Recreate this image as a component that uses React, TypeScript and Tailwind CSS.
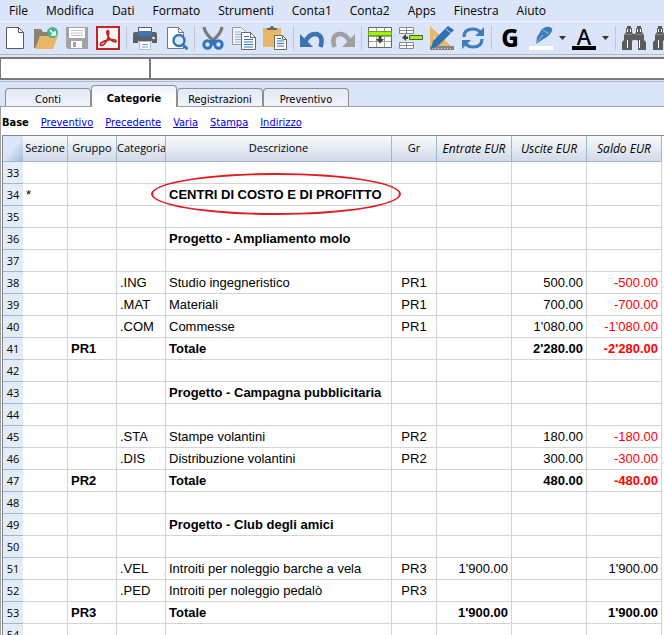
import type { ReactNode } from "react";

const menus = ["File", "Modifica", "Dati", "Formato", "Strumenti", "Conta1", "Conta2", "Apps", "Finestra", "Aiuto"];
const tabs = ["Conti", "Categorie", "Registrazioni", "Preventivo"];
const views = ["Preventivo", "Precedente", "Varia", "Stampa", "Indirizzo"];

type Row = {
  n: number;
  sezione?: string;
  gruppo?: string;
  categoria?: string;
  descrizione?: string;
  gr?: string;
  entrate?: string;
  uscite?: string;
  saldo?: string;
  bold?: boolean;
  circled?: boolean;
};

const rows: Row[] = [
  { n: 33 },
  { n: 34, sezione: "*", descrizione: "CENTRI DI COSTO E DI PROFITTO", bold: true, circled: true },
  { n: 35 },
  { n: 36, descrizione: "Progetto - Ampliamento molo", bold: true },
  { n: 37 },
  { n: 38, categoria: ".ING", descrizione: "Studio ingegneristico", gr: "PR1", uscite: "500.00", saldo: "-500.00" },
  { n: 39, categoria: ".MAT", descrizione: "Materiali", gr: "PR1", uscite: "700.00", saldo: "-700.00" },
  { n: 40, categoria: ".COM", descrizione: "Commesse", gr: "PR1", uscite: "1'080.00", saldo: "-1'080.00" },
  { n: 41, gruppo: "PR1", descrizione: "Totale", uscite: "2'280.00", saldo: "-2'280.00", bold: true },
  { n: 42 },
  { n: 43, descrizione: "Progetto - Campagna pubblicitaria", bold: true },
  { n: 44 },
  { n: 45, categoria: ".STA", descrizione: "Stampe volantini", gr: "PR2", uscite: "180.00", saldo: "-180.00" },
  { n: 46, categoria: ".DIS", descrizione: "Distribuzione volantini", gr: "PR2", uscite: "300.00", saldo: "-300.00" },
  { n: 47, gruppo: "PR2", descrizione: "Totale", uscite: "480.00", saldo: "-480.00", bold: true },
  { n: 48 },
  { n: 49, descrizione: "Progetto - Club degli amici", bold: true },
  { n: 50 },
  { n: 51, categoria: ".VEL", descrizione: "Introiti per noleggio barche a vela", gr: "PR3", entrate: "1'900.00", saldo: "1'900.00" },
  { n: 52, categoria: ".PED", descrizione: "Introiti per noleggio pedalò", gr: "PR3" },
  { n: 53, gruppo: "PR3", descrizione: "Totale", entrate: "1'900.00", saldo: "1'900.00", bold: true },
  { n: 54 },
];

function Tool({ label, children }: { label: string; children: ReactNode }) {
  return (
    <button type="button" aria-label={label} className="size-6 shrink-0">
      <svg viewBox="0 0 24 24" className="size-6" aria-hidden="true">
        {children}
      </svg>
    </button>
  );
}

function Arrow({ label }: { label: string }) {
  return (
    <button type="button" aria-label={label} className="w-[7px] shrink-0">
      <svg viewBox="0 0 7 24" className="h-6 w-[7px]" aria-hidden="true">
        <path d="M0 10h7L3.500 14z" fill="#333" />
      </svg>
    </button>
  );
}

function Separator() {
  return <span className="h-6 w-px shrink-0 bg-[#c3c7cf]" />;
}

function Group({ children }: { children: ReactNode }) {
  return <div className="flex shrink-0 gap-[7px]">{children}</div>;
}

function Binoculars() {
  return (
    <>
      <path
        d="M4 2h1V0h4v2h1v4l1 2h2l1-2V2h1V0h4v2h1v4l2 3v5l2 2v8h-8v-9l-1-1h-4l-1 1v9H0v-8l2-2V9l2-3z"
        fill="#5c5c5c"
      />
      <path d="M5 3h1v3H5zM8 3h1v3H8zM15 3h1v3h-1zM18 3h1v3h-1zM5 14h1v8H5zM17 14h1v8h-1z" fill="#fff" />
      <path d="M3 8.500h7M14 8.500h7" stroke="#858585" />
    </>
  );
}

function Toolbar() {
  return (
    <div className="flex h-[34px] shrink-0 items-center gap-[6px] overflow-hidden border-t border-b border-t-[#eef3fd] border-b-[#b4b8c0] bg-[#dbe5f9] pl-[3px]">
      <Group>
        <Tool label="Nuovo">
          <path d="M3.500 1.500h12l5 5v16h-17z" fill="#fff" stroke="#5b5b5b" />
          <path d="M15.500 1.500v5h5" fill="none" stroke="#5b5b5b" />
        </Tool>
        <Tool label="Apri">
          <path d="M0 3h7l2 3h8v5H6L2 22H0z" fill="#8b8274" />
          <path d="M6 10h18l-5 13H1z" fill="#e8b765" />
          <circle cx="18.500" cy="6.500" r="5.500" fill="#45b58a" />
          <path d="M16 4l4.500 4.500M21 5v4h-4" stroke="#fff" strokeWidth="1.600" fill="none" />
        </Tool>
        <Tool label="Salva">
          <path d="M1 1h22v22H3l-2-2z" fill="#a3a3a3" />
          <path d="M4 2h16v10H4zM6 15h11v7H6z" fill="#fff" />
          <path d="M6 4.500h12M6 7h12M6 9.500h12" stroke="#c4c4c4" />
          <path d="M8 16h3v5H8z" fill="#a3a3a3" />
        </Tool>
        <Tool label="Esporta PDF">
          <path d="M1 1h22v22H1z" fill="#f4f4f8" stroke="#c5231f" strokeWidth="2" />
          <path
            d="M4.500 19c-1-2 4-4.500 8-5.200 4-.7 8 0 7.500 1.600-.4 1.400-4-.2-6-2.300-2.500-2.600-4-7.500-2.500-8.300 1.800-.7 1.300 4.500.2 8C10.500 16.500 6 21 4.500 19z"
            fill="none"
            stroke="#c5231f"
            strokeWidth="1.700"
          />
        </Tool>
      </Group>
      <Separator />
      <Group>
        <Tool label="Stampa">
          <path d="M5.500 1.500h13v7h-13z" fill="#fff" stroke="#555" />
          <path d="M0 8q0-2 2-2h3v4h14V6h3q2 0 2 2v9h-5v-2H5v2H0z" fill="#5b6066" />
          <path d="M5 5h14v5H5z" fill="#3c76b5" />
          <circle cx="20.500" cy="12" r="1.200" fill="#fff" />
          <path d="M6.500 15.500h11v8h-11z" fill="#fff" stroke="#aebccf" />
          <path d="M9 18.500h6M9 21h6" stroke="#6f9fd0" />
        </Tool>
        <Tool label="Anteprima di stampa">
          <path d="M3.500 1.500h11l5 5v16h-16z" fill="#fff" stroke="#777" />
          <path d="M14.500 1.500v5h5" fill="none" stroke="#777" />
          <path d="M18.500 18.500l5 4.500" stroke="#3274b8" strokeWidth="3" />
          <circle cx="15" cy="14.500" r="5.500" fill="#dfe8f7" stroke="#3274b8" strokeWidth="2.400" />
        </Tool>
      </Group>
      <Separator />
      <Group>
        <Tool label="Taglia">
          <path d="M3 1q1 7 10 14M21 1q-1 7-10 14" fill="none" stroke="#7a7a7a" strokeWidth="3.200" />
          <circle cx="6.500" cy="18.500" r="3.700" fill="none" stroke="#3274b8" strokeWidth="3" />
          <circle cx="17.500" cy="18.500" r="3.700" fill="none" stroke="#3274b8" strokeWidth="3" />
          <path d="M8 14h8l-2 5h-4z" fill="#3274b8" />
        </Tool>
        <Tool label="Copia">
          <path d="M.5 1.500h9l4 4v13H.5z" fill="#eff4fd" stroke="#9a9a9a" />
          <path d="M3 6h6M3 8.500h8M3 11h8M3 13.500h8M3 16h8" stroke="#8fb4da" />
          <path d="M9.500 6.500h9l5 5v12h-14z" fill="#fff" stroke="#6a6a6a" />
          <path d="M18.500 6.500v5h5" fill="none" stroke="#6a6a6a" />
          <path d="M12 10.500h5M12 13.500h9M12 16h9M12 18.500h9M12 21h9" stroke="#3274b8" />
        </Tool>
        <Tool label="Incolla">
          <path d="M0 2h18v19H0z" fill="#e8b765" />
          <path d="M4 4V2h3q0-2 2-2t2 2h3v2z" fill="#666" />
          <path d="M11.500 9.500h8l4 4v10h-12z" fill="#fff" stroke="#6a6a6a" />
          <path d="M19.500 9.500v4h4" fill="none" stroke="#6a6a6a" />
          <path d="M14 12.500h4M14 15h7M14 17.500h7M14 20h7" stroke="#3274b8" />
        </Tool>
      </Group>
      <Separator />
      <Group>
        <Tool label="Annulla">
          <path d="M5 16C8 10 11 8 15 8c6 0 8 5 5.500 13" fill="none" stroke="#3a74b2" strokeWidth="4.600" />
          <path d="M0 8v13h13z" fill="#3a74b2" />
        </Tool>
        <Tool label="Ripeti">
          <path d="M19 16C16 10 13 8 9 8c-6 0-8 5-5.500 13" fill="none" stroke="#a0a0a0" strokeWidth="4.600" />
          <path d="M24 8v13H11z" fill="#a0a0a0" />
        </Tool>
      </Group>
      <Separator />
      <Group>
        <Tool label="Inserisci righe">
          <path d="M.5 1.500h23v20H.5zM.5 10.500h23M.5 15.500h23M8.500 1.500v20M16.500 1.500v20" fill="#fff" stroke="#a0a0a0" />
          <path d="M.5 1.500h23v20H.5z" fill="none" stroke="#666" />
          <path d="M.5 5.500h23v4H.5z" fill="#99f50a" stroke="#6aa51e" />
          <path d="M10.500 10h3v3h2.500l-4 4.500L8 13h2.500z" fill="#444" />
        </Tool>
        <Tool label="Aggiungi righe">
          <path d="M.5 1.500h14v6H.5zM.5 4.500h14M7.500 1.500v6M.5 16.500h14v6H.5zM.5 19.500h14M7.500 16.500v6" fill="#fff" stroke="#8a8a8a" />
          <path d="M10.500 9.500h13v4h-13z" fill="#99f50a" stroke="#555" />
          <path d="M9 10.500v2.500H7V15l-4-3.500L7 8v2.500z" fill="#444" />
        </Tool>
        <Tool label="Progetta">
          <path d="M0 0l21 20H0zM4 10v6h6z" fill="#e8b765" fillRule="evenodd" />
          <path d="M0 20h24v4H0z" fill="#858585" />
          <path d="M2 22.500h20" stroke="#ddd" strokeDasharray="1 2" />
          <path d="M18 0l6 4L9 19l-8 4 2-8z" fill="#2f6fb3" />
          <path d="M16 3l5 4" stroke="#c6d8ee" />
        </Tool>
        <Tool label="Aggiorna">
          <path d="M3 11q0-8 9-8 5 0 8 4M21 13q0 8-9 8-5 0-8-4" fill="none" stroke="#3f7dbb" strokeWidth="3.200" />
          <path d="M23 1v9h-9zM1 23v-9h9z" fill="#3f7dbb" />
        </Tool>
      </Group>
      <Separator />
      <Group>
        <button
          type="button"
          aria-label="Grassetto"
          className="size-6 text-center font-['Noto_Sans','Open_Sans',sans-serif] text-2xl leading-6 font-extrabold text-black"
        >
          G
        </button>
        <Tool label="Colore di sfondo">
          <path d="M13 3q4-3 8-2 3 1 2 4-2 4-5 6l-5 3-6 4 1-7z" fill="#3f7dbb" />
          <path d="M7 17l7-8M14 4l6 4" stroke="#9cbfe0" />
          <path d="M0 20h24v4H0z" fill="#fff" />
        </Tool>
      </Group>
      <Arrow label="Scegli colore di sfondo" />
      <button
        type="button"
        aria-label="Colore del testo"
        className="flex size-6 shrink-0 flex-col items-center justify-end border-b-4 border-black font-['Noto_Sans','Open_Sans',sans-serif] text-[22px] leading-5 font-medium text-black"
      >
        A
      </button>
      <Arrow label="Scegli colore del testo" />
      <Separator />
      <Group>
        <Tool label="Cerca">
          <Binoculars />
        </Tool>
        <Tool label="Cerca successivo">
          <Binoculars />
        </Tool>
      </Group>
    </div>
  );
}

const headCell =
  "border-r border-b border-[#9eb6ce] bg-linear-to-b from-[#f8fafc] to-[#d3dbe9] p-0 text-center font-normal whitespace-nowrap overflow-hidden";
const cell = "border-r border-b border-[#d4d4d4] px-[3px] py-0 whitespace-nowrap";

export default function App() {
  return (
    <div className="flex h-screen flex-col overflow-hidden bg-[#dbe5f9] text-black">
      <nav className="flex h-[21px] shrink-0 items-center gap-[18px] pl-[9px] font-['Open_Sans','Noto_Sans',sans-serif] text-xs">
        {menus.map((m) => (
          <button type="button" key={m}>
            {m}
          </button>
        ))}
      </nav>
      <Toolbar />
      <div className="flex h-[27px] shrink-0 items-center border-b border-[#b4b8c0]">
        <input aria-label="Cella" className="h-[23px] w-[151px] border-2 border-l border-[#7a7a7a] bg-white px-1 text-xs" />
        <input aria-label="Contenuto" className="h-[23px] min-w-0 flex-1 border-y-2 border-[#7a7a7a] bg-white px-1 text-xs" />
      </div>
      <div
        role="tablist"
        className="flex h-[25px] shrink-0 items-end border-b border-[#a0a0a0] pl-[5px] font-['DejaVu_Sans_Condensed','DejaVu_Sans',sans-serif] text-[11px]"
      >
        {tabs.map((t) =>
          t === "Categorie" ? (
            <button
              type="button"
              role="tab"
              aria-selected="true"
              key={t}
              className="-mb-px h-[22px] w-[86px] rounded-t border border-b-0 border-[#8f8f8f] bg-linear-to-b from-[#eef2fb] to-white to-60% pt-1 leading-4 font-bold"
            >
              {t}
            </button>
          ) : (
            <button
              type="button"
              role="tab"
              aria-selected="false"
              key={t}
              className="h-[18px] w-[86px] rounded-t border border-b-0 border-[#8f8f8f] bg-linear-to-b from-[#e3e9f8] to-[#f1f4fb] pt-1 leading-3"
            >
              {t}
            </button>
          ),
        )}
      </div>
      <main className="flex min-h-0 flex-1 flex-col border-l border-[#a0a0a0] bg-white pl-px">
        <nav className="flex h-7 shrink-0 items-center gap-3 pt-1 font-['DejaVu_Sans_Condensed','DejaVu_Sans',sans-serif] text-[11px]">
          <b>Base</b>
          {views.map((v) => (
            <a key={v} href="#" className="text-[#0000ee] underline">
              {v}
            </a>
          ))}
        </nav>
        <div className="min-h-0 flex-1 overflow-hidden border-t border-l border-[#7f8690] pr-[2px]">
          <table className="w-full table-fixed border-separate border-spacing-0">
            <colgroup>
              <col className="w-5" />
              <col className="w-[45px]" />
              <col className="w-[49px]" />
              <col className="w-[49px]" />
              <col />
              <col className="w-[45px]" />
              <col className="w-[75px]" />
              <col className="w-[75px]" />
              <col className="w-[75px]" />
            </colgroup>
            <thead className="font-['Open_Sans','Noto_Sans',sans-serif] text-[11px]">
              <tr className="h-[26px]">
                <th aria-label="Riga" className="border-b border-[#9eb6ce] bg-linear-to-br from-[#dce6f8] from-50% to-[#a3b9d6] p-0" />
                <th className={headCell}>Sezione</th>
                <th className={headCell}>Gruppo</th>
                <th className={headCell}>Categoria</th>
                <th className={headCell}>Descrizione</th>
                <th className={headCell}>Gr</th>
                <th className={`${headCell} text-xs italic`}>Entrate EUR</th>
                <th className={`${headCell} text-xs italic`}>Uscite EUR</th>
                <th className={`${headCell} text-xs italic`}>Saldo EUR</th>
              </tr>
            </thead>
            <tbody className="font-['Liberation_Sans',Arial,sans-serif] text-[13px] leading-5">
              {rows.map((r) => (
                <tr key={r.n} className={r.bold ? "h-[22px] font-bold" : "h-[22px]"}>
                  <th className="border-b border-[#9eb6ce] bg-[#e4ecf7] p-0 text-center font-['Open_Sans','Noto_Sans',sans-serif] text-[11px] leading-5 font-normal">
                    {r.n}
                  </th>
                  <td className={`${cell} font-normal`}>{r.sezione}</td>
                  <td className={cell}>{r.gruppo}</td>
                  <td className={cell}>{r.categoria}</td>
                  <td className={`${cell} relative`}>
                    {r.descrizione}
                    {r.circled && (
                      <span className="absolute -top-[11px] -left-[15px] h-[42px] w-[250px] rounded-[50%] border-2 border-[#e31b23]" />
                    )}
                  </td>
                  <td className={`${cell} text-center`}>{r.gr}</td>
                  <td className={`${cell} text-right`}>{r.entrate}</td>
                  <td className={`${cell} text-right`}>{r.uscite}</td>
                  <td className={`${cell} text-right ${r.saldo?.startsWith("-") ? "text-[#ff0000]" : ""}`}>{r.saldo}</td>
                </tr>
              ))}
            </tbody>
          </table>
        </div>
      </main>
    </div>
  );
}
